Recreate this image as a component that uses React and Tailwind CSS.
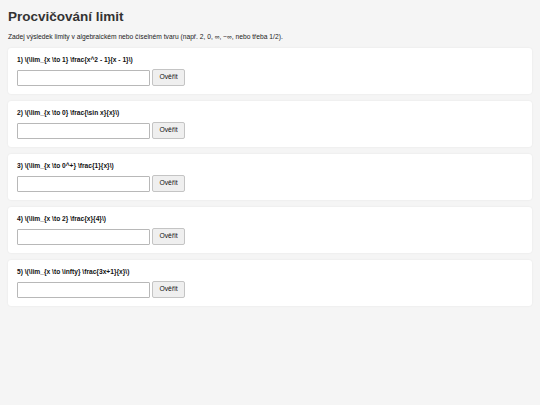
import React, { useState } from 'react';

const problems = [
  '\\(\\lim_{x \\to 1} \\frac{x^2 - 1}{x - 1}\\)',
  '\\(\\lim_{x \\to 0} \\frac{\\sin x}{x}\\)',
  '\\(\\lim_{x \\to 0^+} \\frac{1}{x}\\)',
  '\\(\\lim_{x \\to 2} \\frac{x}{4}\\)',
  '\\(\\lim_{x \\to \\infty} \\frac{3x+1}{x}\\)',
];

function Problem({ index, expr }) {
  const [value, setValue] = useState('');

  return (
    <div className="bg-white rounded-[3px] shadow-[0_0_2px_rgba(0,0,0,0.08)] px-[9px] pt-[7px] pb-[9px] h-[46px] mb-[7px]">
      <div className="text-[6.65px] leading-[9px] font-bold text-[#111]">
        {index}) {expr}
      </div>
      <div className="flex items-center gap-[2px] mt-[5px]">
        <input
          value={value}
          onChange={(e) => setValue(e.target.value)}
          className="w-[133px] h-[16px] border border-[#b8b8b8] rounded-[1px] bg-white px-1 text-[7px] outline-none"
        />
        <button className="h-[17px] w-[33px] border border-[#c4c4c4] rounded-[2px] bg-[#efefef] text-[6.8px] text-[#111]">
          Ověřit
        </button>
      </div>
    </div>
  );
}

export default function App() {
  return (
    <div
      className="min-h-[405px] bg-[#f5f5f5] px-2 pt-[9px] text-[#222]"
      style={{ fontFamily: '"Liberation Sans", Arial, sans-serif' }}
    >
      <h1 className="text-[13.5px] leading-[16px] font-bold text-[#333]">Procvičování limit</h1>
      <p className="text-[6.7px] leading-[8px] mt-[8px] mb-[7px] text-[#222]">
        Zadej výsledek limity v algebraickém nebo číselném tvaru (např. 2, 0, ∞, −∞, nebo třeba 1/2).
      </p>
      {problems.map((p, i) => (
        <Problem key={i} index={i + 1} expr={p} />
      ))}
    </div>
  );
}
